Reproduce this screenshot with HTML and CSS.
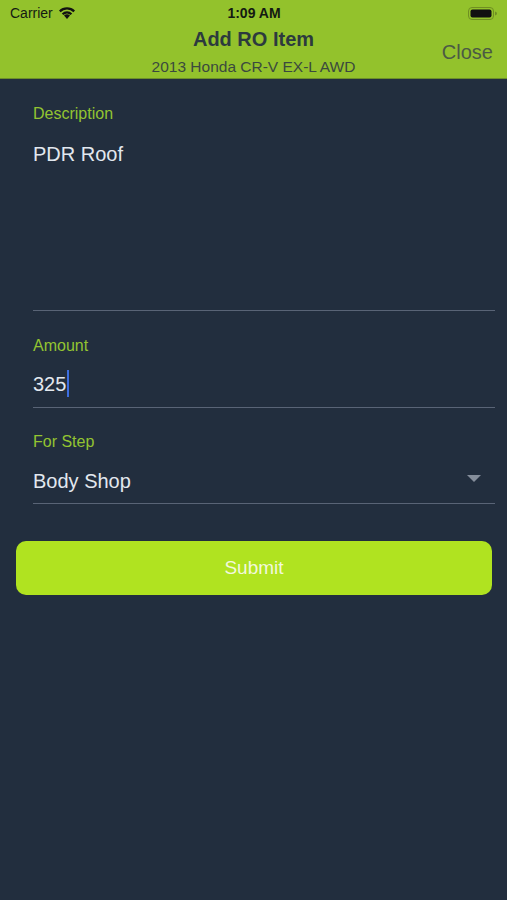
FILE: index.html
```html
<!DOCTYPE html>
<html lang="en">
<head>
    <meta charset="UTF-8">
    <meta name="viewport" content="width=device-width, initial-scale=1.0">
    <title>Add RO Item</title>
    <link rel="stylesheet" href="styles.css">
</head>
<body>
    <header class="topbar">
        <div class="status">
            <div class="carrier">
                Carrier
                <svg class="wifi" width="18" height="13" viewBox="0 0 18 13">
                    <path d="M9 13 L6 9.6 A4.6 4.6 0 0 1 12 9.6 Z" fill="#111"/>
                    <path d="M3.8 7.4 A7.6 7.6 0 0 1 14.2 7.4 L12.6 9 A5.4 5.4 0 0 0 5.4 9 Z" fill="#111"/>
                    <path d="M1 4.6 A11.4 11.4 0 0 1 17 4.6 L15.4 6.2 A9.2 9.2 0 0 0 2.6 6.2 Z" fill="#111"/>
                </svg>
            </div>
            <div class="clock">1:09 AM</div>
            <div class="battery">
                <svg width="30" height="13" viewBox="0 0 30 13">
                    <rect x="0.5" y="0.5" width="25" height="12" rx="3.5" fill="none" stroke="#6f8f22" stroke-width="1"/>
                    <rect x="2.5" y="2.5" width="21" height="8" rx="2" fill="#111"/>
                    <path d="M27 4.5 Q29 5 29 6.5 Q29 8 27 8.5 Z" fill="#6f8f22"/>
                </svg>
            </div>
        </div>
        <div class="navbar">
            <div class="titles">
                <h1>Add RO Item</h1>
                <p class="subtitle">2013 Honda CR-V EX-L AWD</p>
            </div>
            <a class="close">Close</a>
        </div>
    </header>

    <main class="form">
        <div class="field field-desc">
            <label>Description</label>
            <div class="value">PDR Roof</div>
        </div>
        <div class="field">
            <label>Amount</label>
            <div class="value">325<span class="cursor"></span></div>
        </div>
        <div class="field field-step">
            <label>For Step</label>
            <div class="value select">
                Body Shop
                <span class="caret"></span>
            </div>
        </div>
        <button class="submit">Submit</button>
    </main>
</body>
</html>
```

FILE: styles.css
```css
body {
    margin: 0;
    padding: 0;
    background-color: #222e3e;
    font-family: "Liberation Sans", Arial, sans-serif;
    min-height: 900px;
}
.topbar {
    background-color: #93c22c;
    height: 78px;
    border-bottom: 1px solid #6d8f2a;
    color: #2b3538;
}
.status {
    height: 26px;
    display: flex;
    align-items: center;
    justify-content: space-between;
    padding: 0 9px 0 10px;
    font-size: 14px;
    color: #141a12;
}
.carrier {
    flex: 1;
    display: flex;
    align-items: center;
    gap: 5px;
}
.wifi {
    margin-top: -2px;
}
.clock {
    font-weight: bold;
    flex: 1;
    text-align: center;
}
.battery {
    flex: 1;
    display: flex;
    justify-content: flex-end;
}
.navbar {
    position: relative;
    text-align: center;
}
.titles h1 {
    margin: 0;
    font-size: 20px;
    line-height: 26px;
    color: #2c3a3e;
}
.subtitle {
    margin: 5px 0 0;
    font-size: 15.5px;
    line-height: 20px;
    color: #3b4a3e;
}
.close {
    position: absolute;
    right: 14px;
    top: 15px;
    font-size: 20px;
    color: #4b5a44;
}
.form {
    padding: 0 12px 0 16px;
}
.field {
    margin-left: 17px;
    border-bottom: 1px solid #596476;
}
.field label {
    display: block;
    padding-top: 25px;
    font-size: 16px;
    line-height: 20px;
    color: #93c431;
}
.value {
    font-size: 20px;
    line-height: 24px;
    color: #e2e8ef;
    padding: 14px 0 10px;
    display: flex;
    align-items: center;
}
.field-desc .value {
    height: 168px;
    align-items: flex-start;
    padding-top: 18px;
    padding-bottom: 0;
}
.field-step label {
    padding-top: 24px;
}
.field-step .value {
    padding: 17px 0 10px;
}
.cursor {
    display: inline-block;
    width: 2px;
    height: 27px;
    background-color: #3d6ee0;
    margin-left: 1px;
}
.select {
    justify-content: space-between;
}
.caret {
    width: 0;
    height: 0;
    border-left: 7px solid transparent;
    border-right: 7px solid transparent;
    border-top: 7px solid #858e9b;
    margin-right: 14px;
    margin-top: -6px;
}
.submit {
    display: block;
    width: 476px;
    height: 54px;
    margin-top: 37px;
    border: none;
    border-radius: 10px;
    background-color: #b0e320;
    color: #f2f8de;
    font-family: "Liberation Sans", Arial, sans-serif;
    font-size: 19px;
}
```
